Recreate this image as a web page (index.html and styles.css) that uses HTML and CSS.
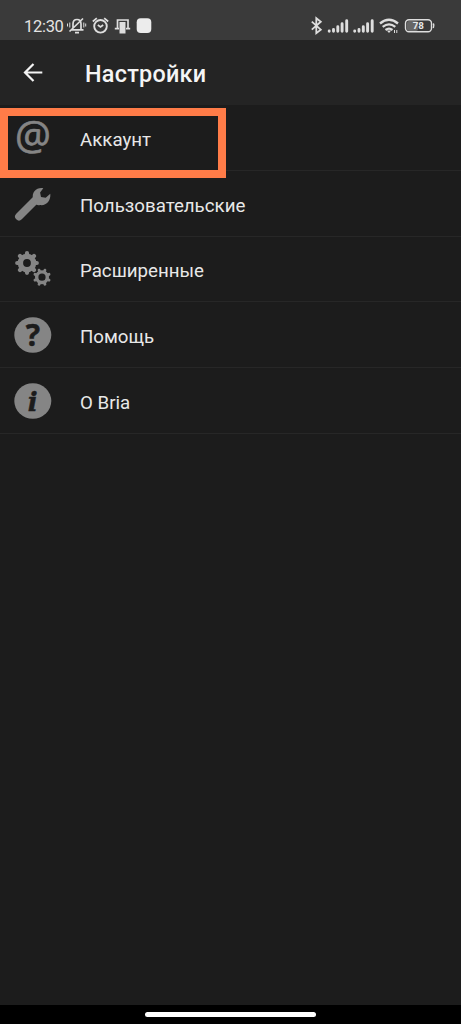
FILE: index.html
```html
<!DOCTYPE html>
<html lang="ru">
<head>
<meta charset="utf-8">
<title>Настройки</title>
<link rel="stylesheet" href="styles.css">
</head>
<body>
<div class="screen">
  <div class="status">
    <span class="time">12:30</span>
    <svg class="status-left" viewBox="65 0 95 40" fill="none" stroke="#dedede" stroke-width="1.700">
      <path d="M71 29.800h12.500M73 28v-4q0-4.500 4-4.500t4 4.500v5M75 32.700h4M69.500 31.500 83 18.500"/>
      <path d="M69.800 22.500v5M67.500 23.500v3M83.800 22.500v5M85.700 23.500v3" stroke-width="1"/>
      <circle cx="100.500" cy="26.300" r="6.300" stroke-width="1.900"/>
      <path d="M92.800 21.500l4-3.300M108.200 21.500l-4-3.300M97.800 25l2.700 2 2.700-2"/>
      <path d="M117.500 28v-8h10.500v8M114.800 28.700h4.200M126 28.700h4.200"/>
      <path d="M119.500 22h6v11.500h-6z" fill="#dedede" stroke="none"/>
      <rect x="136.700" y="18.300" width="14.600" height="14.700" rx="4" fill="#ececec" stroke="none"/>
    </svg>
    <svg class="status-right" viewBox="305 0 135 40" fill="none" stroke="#dedede" stroke-width="1.800">
      <path d="M311.800 21.700l9 8-4.500 3.500v-15l4.500 3.500-9 8"/>
      <g stroke-width="2.900" stroke-linecap="round">
        <path d="M329.200 31v.2M333.500 29.500v1.700M337.800 26.800v4.400M342.100 23.800v7.400M346.700 20.800v10.400"/>
        <path d="M354.700 31v.2M359 29.500v1.700M363.300 26.800v4.400M367.600 23.800v7.400M372.200 20.800v10.400"/>
      </g>
      <path d="M380 23.500q9-7.500 18 0M382.700 26.900q6.300-5 12.600 0M385.500 30q3.500-2.700 7 0" stroke-width="2.300"/>
      <path d="M386.800 30.500h4.400l-2.200 2.500z" fill="#dedede" stroke="none"/>
      <path d="M394.500 33v-3M396.800 30v3" stroke-width="1"/>
      <rect x="407" y="21" width="11" height="10" rx="2" fill="#666" stroke="none"/>
      <rect x="405.500" y="19.700" width="26" height="12" rx="3.500" stroke-width="1.400"/>
      <path d="M433.300 23.500q1.200 2 0 4.500" stroke-width="1.500"/>
      <text class="battery" x="418.300" y="29.400" text-anchor="middle">78</text>
    </svg>
  </div>
  <header class="header">
    <svg class="back" viewBox="0 0 20 20" fill="none" stroke="#f4f4f4" stroke-width="2.200"><path d="M19.300 9.500H2M10.500 1 2 9.500l8.500 8.500"/></svg>
    <h1 class="title">Настройки</h1>
  </header>
  <main class="list">
    <div class="row">
      <svg class="icon" viewBox="0 0 60 65"><text class="at" x="33" y="45" text-anchor="middle">@</text></svg>
      <span class="label">Аккаунт</span>
      <div class="highlight"></div>
    </div>
    <div class="row">
      <svg class="icon" viewBox="0 0 60 65" fill="none" stroke="#858585">
        <path d="M19 45.500 36.500 28" stroke-width="7.800" stroke-linecap="round"/>
        <path d="M43.300 17.300C37 16 31.500 21 33 27.500c-1 3 3.500 8 7 6.500 6 1 11-4 10.300-11.300l-4.600 4.100-4.700-.8-.9-4.500z" fill="#858585" stroke="none"/>
      </svg>
      <span class="label">Пользовательские</span>
    </div>
    <div class="row">
      <svg class="icon" viewBox="0 1 60 65" fill="none" stroke="#858585">
        <circle cx="27" cy="27" r="6.600" stroke-width="5.400"/>
        <path d="M27 19v-1.800M27 35v1.800M19 27h-1.800M35 27h1.800M21.300 21.300l-1.300-1.300M32.700 21.300l1.300-1.300M21.300 32.700l-1.300 1.300M32.700 32.700l1.300 1.300" stroke-width="4.200" stroke-linecap="round"/>
        <circle cx="42" cy="41.200" r="5.300" stroke-width="3.400"/>
        <path d="M44.500 35.200l.4-1M48 38.700l1-.4M48 43.700l1 .4M44.500 47.200l.4 1M39.500 47.200l-.4 1M36 43.700l-1 .4M36 38.700l-1-.4M39.500 35.200l-.4-1" stroke-width="2.900" stroke-linecap="round"/>
      </svg>
      <span class="label">Расширенные</span>
    </div>
    <div class="row">
      <svg class="icon" viewBox="0 0 60 65">
        <ellipse cx="32.800" cy="33" rx="18.500" ry="17.800" fill="#858585"/>
        <text class="question" x="32.800" y="44" text-anchor="middle">?</text>
      </svg>
      <span class="label">Помощь</span>
    </div>
    <div class="row">
      <svg class="icon" viewBox="0 0 60 65">
        <ellipse cx="32.800" cy="33" rx="18.500" ry="17.800" fill="#858585"/>
        <text class="info" x="32.800" y="42.500" text-anchor="middle">i</text>
      </svg>
      <span class="label">О Bria</span>
    </div>
  </main>
  <div class="nav"><div class="pill"></div></div>
</div>
</body>
</html>
```
FILE: styles.css
```css
* { box-sizing: border-box; }
body { margin: 0; background: #1c1c1c; font-family: Roboto, "Noto Sans", sans-serif; }
.screen { width: 461px; height: 1024px; display: flex; flex-direction: column; overflow: hidden; background: #1c1c1c; }
.status { height: 40px; flex: none; display: flex; background: #3a3a3a; }
.time { width: 65px; padding: 12px 0 0 24px; font-size: 16.5px; line-height: 30px; color: #e4e4e4; white-space: nowrap; letter-spacing: -0.3px; }
.status-left { width: 95px; height: 40px; }
.status-right { width: 135px; height: 40px; margin-left: 145px; }
.battery { font: 700 9.8px Roboto, sans-serif; fill: #e8e8e8; stroke: none; }
.header { height: 65px; flex: none; display: flex; align-items: center; background: #242424; }
.back { width: 20px; height: 20px; margin-left: 23px; }
.title { margin: 3px 0 0 42px; font-size: 23.4px; font-weight: 500; line-height: 30px; letter-spacing: 0.25px; color: #f5f5f5; }
.list { flex: 1; padding-top: 0.4px; }
.row { position: relative; height: 65.7px; display: flex; align-items: flex-start; border-bottom: 1px solid #272727; }
.icon { width: 60px; height: 65px; flex: none; }
.label { margin: 19.6px 0 0 20px; font-size: 18.7px; line-height: 30px; color: #e8e8e8; white-space: nowrap; }
.highlight { position: absolute; left: 0; top: 3px; width: 226px; height: 70px; border: 8px solid #ff7c48; z-index: 1; }
.at { font: 500 40px "Open Sans", sans-serif; fill: #858585; stroke: #858585; stroke-width: 0.7px; }
.question { font: 700 30px "Open Sans", sans-serif; fill: #1c1c1c; stroke: #1c1c1c; stroke-width: 0.5px; }
.info { font: italic 700 26px "DejaVu Serif", serif; fill: #1c1c1c; stroke: #1c1c1c; stroke-width: 0.5px; }
.nav { height: 19px; flex: none; display: flex; justify-content: center; align-items: flex-start; background: #000; }
.pill { width: 171px; height: 5px; margin-top: 7px; border-radius: 3px; background: #fff; }
```
